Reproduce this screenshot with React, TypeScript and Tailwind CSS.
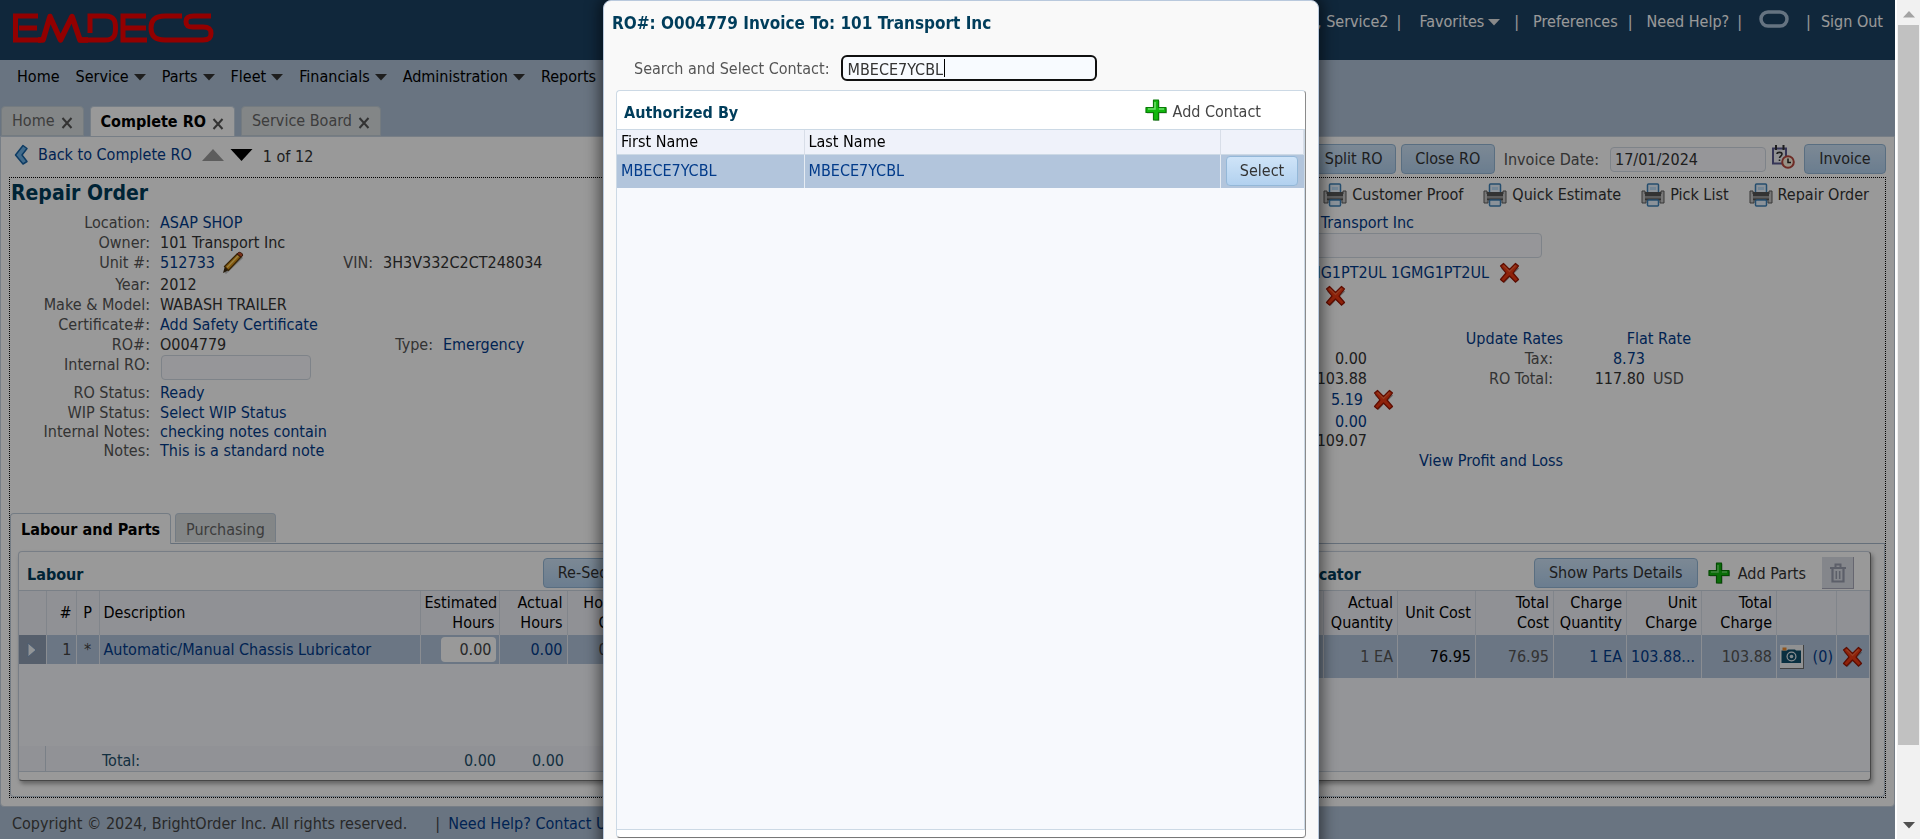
import React from "react";

function Caret({ className = "" }: { className?: string }) {
  return (
    <svg className={`h-2 w-3 shrink-0 ${className}`} viewBox="0 0 12 8" aria-hidden="true">
      <path d="M0 1h12L6 7.500z" fill="currentColor" />
    </svg>
  );
}

function Logo() {
  return (
    <svg className="h-8 w-[202px]" viewBox="0 0 202 32" fill="none" stroke="#f50000" strokeWidth="5" role="img" aria-label="EMDECS">
      <path d="M26 4H3.500v24H29M7 16h18" />
      <path d="M26 28h5L38 4.500 48.500 28 60 4.500 68 28h8" strokeWidth="5.500" strokeLinejoin="round" />
      <path d="M78 21V4h15c10 0 10.500 6 10.500 12S103 28 93 28H68" />
      <path d="M134 4h-23v24h24M113 16h21" />
      <path d="M170 4h-17c-11 0-14 5-14 12s3 12 14 12h38c7 0 8-3 8-6.500S198 15 191 15h-10c-5 0-7-1-7-5.500S177 4 182 4h17" />
    </svg>
  );
}

function RedX() {
  return (
    <svg className="h-[22px] w-[22px]" viewBox="0 0 22 22" role="img" aria-label="Remove">
      <path d="M5 3.500 11 9l6-5.500 3 3L14.500 12l5 6.500-3 2.500L11 15l-5.500 6-3-2.500 5-6.500L2 6.500z" fill="#555" opacity=".5" />
      <path d="M4.500 1.500 10.500 7.500 16.500 1.500 19.500 4 14 11l5.500 6.500-3 2.500-6-6-6 6-3-2.500L7 11 1.500 4z" fill="#ee3a12" stroke="#9c1400" strokeWidth="1.200" strokeLinejoin="round" />
      <path d="M4.500 3.500 10.500 9.500 16.500 3.500" fill="none" stroke="#f8683a" strokeWidth="1.200" />
    </svg>
  );
}

function GreenPlus() {
  return (
    <svg className="h-[22px] w-[22px]" viewBox="0 0 22 22" aria-hidden="true">
      <path d="M9.500 2h5v7.500H22v5h-7.500V22h-5v-7.500H2v-5h7.500z" fill="#666" opacity=".45" />
      <path d="M8.500 1h5v7.500H21v5h-7.500V21h-5v-7.500H1v-5h7.500z" fill="#12b80e" stroke="#087a06" strokeWidth="1.200" strokeLinejoin="round" />
      <path d="M10 3v7H3M14 10h5" fill="none" stroke="#6fe06c" strokeWidth="1.500" />
    </svg>
  );
}

function Printer() {
  return (
    <svg className="h-6 w-6 shrink-0" viewBox="0 0 24 24" aria-hidden="true">
      <path d="M1 8h3v3h16V8h3v12h-4v-3H5v3H1z" fill="#c8c8c8" stroke="#5c5c5c" />
      <rect x="6.500" y="1" width="11" height="10" rx="1" fill="#e8f4ff" stroke="#3f81b8" strokeWidth="1.500" />
      <path d="M9 4h6v3H9z" fill="#bfe0fa" />
      <path d="M4 9h16v8H4z" fill="#555" />
      <path d="M4 13h16v2.500H4z" fill="#999" />
      <rect x="6.500" y="17" width="11" height="6" rx="1" fill="#e8f4ff" stroke="#3f81b8" strokeWidth="1.500" />
    </svg>
  );
}

function CalendarClock() {
  return (
    <svg className="h-6 w-6" viewBox="0 0 24 24" role="img" aria-label="Pick date">
      <rect x="2" y="3.500" width="13" height="15" fill="#f2f2f6" stroke="#5b5b92" strokeWidth="2" />
      <path d="M5 0v5M12.500 0v5" stroke="#333" strokeWidth="2" />
      <path d="M6 9c0-2.200 5-2.200 5 0 0 2-2.300 2-2.500 4M8.500 14.500v1.500" fill="none" stroke="#333" strokeWidth="1.600" />
      <circle cx="17" cy="17" r="5.800" fill="#fff3df" stroke="#b8483e" strokeWidth="2" />
      <path d="M17 13.500v4h3" fill="none" stroke="#222" strokeWidth="1.500" />
    </svg>
  );
}

function Pencil() {
  return (
    <svg className="h-6 w-6" viewBox="0 0 24 24" role="img" aria-label="Edit">
      <path d="M4 22 21 6" stroke="#666" strokeWidth="3" opacity=".4" />
      <path d="M2 22l2-7 4 4z" fill="#3c2a10" />
      <path d="M3.500 15.500 16 3l4 3L7.500 19.500z" fill="#dc951a" stroke="#5a3a08" strokeWidth="1.200" />
      <path d="M6 16.500 17.500 4.500" stroke="#ffd970" strokeWidth="1.200" />
      <path d="M16 3c1-1.500 2-2 3.500-1.500S22 3.500 21.500 5L20 6z" fill="#c4502c" stroke="#5a2a10" strokeWidth="1" />
    </svg>
  );
}

function Camera() {
  return (
    <svg className="h-[24px] w-[24px] shrink-0" viewBox="0 0 24 24" role="img" aria-label="Photos">
      <path d="M0 0h24v24H0z" fill="#6d6d6d" />
      <path d="M0 0h23v23H0z" fill="#f0f2f4" />
      <path d="M1.500 5.500H7L8 4.500h7l1 1h5v12.500H1.500z" fill="#0f4f6c" />
      <path d="M2.500 2.500h4v3h-4z" fill="#ef8b2d" />
      <circle cx="11.500" cy="11.500" r="5" fill="#e8eef2" />
      <circle cx="11.500" cy="11.500" r="3.800" fill="#0f4f6c" />
      <circle cx="11.500" cy="11.500" r="1.800" fill="#d5e4ec" />
    </svg>
  );
}

function Trash() {
  return (
    <svg className="h-5 w-4" viewBox="0 0 16 20" fill="none" stroke="#9a9fb0" aria-hidden="true">
      <path d="M0 5h16M5.500 4V1.500h5V4" strokeWidth="2" />
      <path d="M2.500 6v12.500h11V6" strokeWidth="2.200" />
      <path d="M6.300 8v8M9.700 8v8" strokeWidth="1.500" />
    </svg>
  );
}

function ActionButton({ children, className = "" }: { children: React.ReactNode; className?: string }) {
  return (
    <button
      type="button"
      className={`h-[30px] shrink-0 rounded border border-[#94b8d8] bg-linear-to-b from-[#cfe4f8] to-[#b2d1ef] text-center whitespace-nowrap text-[#333] ${className}`}
    >
      {children}
    </button>
  );
}

function Link({ children, className = "" }: { children: React.ReactNode; className?: string }) {
  return (
    <a href="#" className={`whitespace-nowrap text-[#023b8a] ${className}`}>
      {children}
    </a>
  );
}

function Row({ label, children, className = "h-5" }: { label: string; children: React.ReactNode; className?: string }) {
  return (
    <div className={`flex gap-2.5 ${className}`}>
      <div className="w-[140px] shrink-0 text-right whitespace-nowrap text-[#555]">{label}</div>
      <div className="flex whitespace-nowrap text-[#333]">{children}</div>
    </div>
  );
}

function PageTab({ label, active = false }: { label: string; active?: boolean }) {
  return (
    <div
      className={
        active
          ? "flex h-[31px] items-center gap-1.5 rounded-t border border-b-0 border-[#c6d4e2] bg-white px-2.5 font-bold text-black"
          : "flex h-[30px] items-center gap-1.5 rounded-t border border-[#c2cdd6] bg-[#dbe0e2] px-2.5 text-[#666]"
      }
    >
      <a href="#">{label}</a>
      <button type="button" aria-label={`Close ${label}`} className="pt-1">
        <svg className="h-3 w-3 text-[#555]" viewBox="0 0 12 12" aria-hidden="true">
          <path d="M1.500 1 10.500 11M10.500 1 1.500 11" stroke="currentColor" strokeWidth="2" />
        </svg>
      </button>
    </div>
  );
}

const menu = [
  { label: "Home", drop: false },
  { label: "Service", drop: true },
  { label: "Parts", drop: true },
  { label: "Fleet", drop: true },
  { label: "Financials", drop: true },
  { label: "Administration", drop: true },
  { label: "Reports", drop: false },
];

const reports = ["Customer Proof", "Quick Estimate", "Pick List", "Repair Order"];

function Header() {
  return (
    <header className="flex h-[60px] shrink-0 items-start justify-between bg-[#1c4163] pt-3 pr-3 pl-3 text-white">
      <Logo />
      <div className="flex h-5 items-center whitespace-nowrap">
        <span className="mr-2">Technician, Service2</span>|
        <button type="button" className="ml-[18px] flex items-center gap-1">
          Favorites <Caret className="text-[#e4e4e4]" />
        </button>
        <span className="mx-3.5">|</span>
        <a href="#">Preferences</a>
        <span className="mr-3.5 ml-2.5">|</span>
        <a href="#">Need Help?</a>
        <span className="ml-2">|</span>
        <svg className="mx-[17px] mb-1.5 h-[18px] w-[30px]" viewBox="0 0 30 18" aria-hidden="true">
          <rect x="2" y="2" width="26" height="14" rx="7" fill="none" stroke="#a9c0d8" strokeWidth="3.500" />
        </svg>
        <span className="mr-2.5">|</span>
        <a href="#">Sign Out</a>
      </div>
    </header>
  );
}

function RepairOrderDetails() {
  return (
    <div className="mt-1 h-[300px] w-0 flex-1 leading-5">
      <Row label="Location:"><Link>ASAP SHOP</Link></Row>
      <Row label="Owner:">101 Transport Inc</Row>
      <Row label="Unit #:" className="h-[22px]">
        <div className="flex w-[98px] items-start gap-1.5">
          <Link>512733</Link>
          <button type="button" className="-mt-0.5"><Pencil /></button>
        </div>
        <div className="w-[115px] text-right text-[#555]">VIN:</div>
        <div className="ml-2.5">3H3V332C2CT248034</div>
      </Row>
      <Row label="Year:">2012</Row>
      <Row label="Make & Model:">WABASH TRAILER</Row>
      <Row label="Certificate#:"><Link>Add Safety Certificate</Link></Row>
      <Row label="RO#:">
        <div className="w-[98px]">O004779</div>
        <div className="w-[175px] text-right text-[#555]">Type:</div>
        <Link className="ml-2.5">Emergency</Link>
      </Row>
      <Row label="Internal RO:" className="h-7">
        <input aria-label="Internal RO" className="ml-px h-[25px] w-[150px] rounded border border-[#d3dbe4] bg-[#fafbff] px-1" />
      </Row>
      <Row label="RO Status:"><Link>Ready</Link></Row>
      <Row label="WIP Status:" className="h-[19px]"><Link>Select WIP Status</Link></Row>
      <Row label="Internal Notes:" className="h-[19px]"><Link>checking notes contain</Link></Row>
      <Row label="Notes:" className="h-[19px]"><Link>This is a standard note</Link></Row>
    </div>
  );
}

function InvoiceDetails() {
  return (
    <div className="mt-1 w-[600px] shrink-0 leading-5">
      <div className="h-5 w-[129px] text-right"><Link>101 Transport Inc</Link></div>
      <input aria-label="Reference" className="block h-[25px] w-[257px] rounded border border-[#d3dbe4] bg-[#fafbff] px-1" />
      <div className="mt-[3px] flex h-6 items-center">
        <div className="flex w-[204px] justify-end"><Link>1GMG1PT2UL 1GMG1PT2UL</Link></div>
        <button type="button" className="ml-2.5"><RedX /></button>
      </div>
      <button type="button" className="ml-10 block"><RedX /></button>
      <div className="mt-[22px] flex">
        <div className="w-[278px] text-right"><Link>Update Rates</Link></div>
        <div className="w-[128px] text-right"><Link>Flat Rate</Link></div>
      </div>
      <div className="flex">
        <div className="w-[82px] text-right text-[#333]">0.00</div>
        <div className="w-[186px] text-right text-[#555]">Tax:</div>
        <div className="w-[92px] text-right"><Link>8.73</Link></div>
      </div>
      <div className="flex h-[19px]">
        <div className="w-[82px] text-right text-[#333]">103.88</div>
        <div className="w-[186px] text-right text-[#555]">RO Total:</div>
        <div className="w-[92px] text-right text-[#333]">117.80</div>
        <div className="ml-2 text-[#555]">USD</div>
      </div>
      <div className="flex h-6 items-center">
        <div className="w-[78px] text-right"><Link>5.19</Link></div>
        <button type="button" className="ml-2.5"><RedX /></button>
      </div>
      <div className="h-[19px] w-[82px] text-right"><Link>0.00</Link></div>
      <div className="w-[82px] text-right text-[#333]">109.07</div>
      <div className="w-[278px] text-right"><Link>View Profit and Loss</Link></div>
    </div>
  );
}

const headCell = "border-r border-[#d8dee8] px-1 font-normal text-black";
const bodyCell = "border-r border-[#e6ecf3] px-1";

function LabourCard() {
  return (
    <section className="flex h-[230px] w-0 flex-1 flex-col rounded border border-[#c9d3e0] border-b-[#777] bg-white shadow-[2px_3px_4px_rgba(0,0,0,0.35)]">
      <div className="flex h-[38px] shrink-0 items-center pt-1 pl-2">
        <h2 className="w-[516px] pt-1 font-bold text-[#003d5b]">Labour</h2>
        <ActionButton className="w-[124px]">Re-Sequence</ActionButton>
      </div>
      <div className="flex flex-1 flex-col border-y border-[#ccd6e2] bg-[#f7f8fd]">
        <table className="w-full table-fixed border-collapse leading-5">
          <colgroup>
            <col className="w-[27px]" />
            <col className="w-[30px]" />
            <col className="w-[23px]" />
            <col className="w-[321px]" />
            <col className="w-[79px]" />
            <col className="w-[68px]" />
            <col className="w-[68px]" />
            <col />
          </colgroup>
          <thead>
            <tr className="h-[44px] bg-[#f0f2f9]">
              <th className={headCell} />
              <th className={`${headCell} text-right`}>#</th>
              <th className={`${headCell} text-center`}>P</th>
              <th className={`${headCell} text-left`}>Description</th>
              <th className={`${headCell} text-right`}>Estimated Hours</th>
              <th className={`${headCell} text-right`}>Actual Hours</th>
              <th className={`${headCell} text-right`}>Hourly Cost</th>
              <th className={headCell} />
            </tr>
          </thead>
          <tbody>
            <tr className="h-[29px] bg-[#b2c5dc] text-[#444]">
              <td className="border-r border-[#e6ecf3] bg-[#909fb4] px-2">
                <svg className="h-4 w-2.5" viewBox="0 0 10 16" aria-hidden="true">
                  <path d="M1 1 9 8 1 15z" fill="#f4f8fc" stroke="#7f9cc0" />
                </svg>
              </td>
              <td className={`${bodyCell} text-right`}>1</td>
              <td className={`${bodyCell} text-center`}>*</td>
              <td className={bodyCell}><Link>Automatic/Manual Chassis Lubricator</Link></td>
              <td className="border-r border-[#e6ecf3] pr-[3px]">
                <input aria-label="Estimated Hours" defaultValue="0.00" className="ml-auto block h-[25px] w-[55px] rounded bg-white px-1 text-right text-[#444]" />
              </td>
              <td className={`${bodyCell} text-right`}><Link>0.00</Link></td>
              <td className={`${bodyCell} text-right`}>0.00</td>
              <td className={bodyCell} />
            </tr>
          </tbody>
        </table>
        <div className="mt-auto flex h-[25px] items-center bg-[#f2f4fa] text-[#1f4f6b]">
          <div className="h-full w-[27px] border-r border-[#ccd6e2]" />
          <div className="w-[377px] pt-1 pl-14">Total:</div>
          <div className="w-[73px] pt-1 text-right">0.00</div>
          <div className="w-[68px] pt-1 text-right">0.00</div>
        </div>
      </div>
      <div className="h-2 shrink-0" />
    </section>
  );
}

function PartsCard() {
  return (
    <section className="flex h-[230px] w-0 flex-1 flex-col rounded border border-[#c9d3e0] border-r-[#777] border-b-[#777] bg-white shadow-[2px_3px_4px_rgba(0,0,0,0.35)]">
      <div className="flex h-[38px] shrink-0 items-center pt-1 pr-4">
        <h2 className="mr-[173px] ml-auto pt-1 font-bold whitespace-nowrap text-[#003d5b]">Automatic/Manual Chassis Lubricator</h2>
        <ActionButton className="w-[164px]">Show Parts Details</ActionButton>
        <button type="button" className="ml-2.5 flex items-center gap-2 whitespace-nowrap text-[#333]">
          <GreenPlus />
          <span className="pt-0.5">Add Parts</span>
        </button>
        <button type="button" aria-label="Delete" className="ml-4 flex h-8 w-8 items-center justify-center border-r border-b border-[#aab] bg-[#dcdfe8]">
          <Trash />
        </button>
      </div>
      <div className="flex-1 border-y border-[#ccd6e2] bg-[#f7f8fd]">
        <table className="w-full table-fixed border-collapse leading-5">
          <colgroup>
            <col />
            <col className="w-[74px]" />
            <col className="w-[78px]" />
            <col className="w-[78px]" />
            <col className="w-[73px]" />
            <col className="w-[75px]" />
            <col className="w-[75px]" />
            <col className="w-[60px]" />
            <col className="w-[33px]" />
          </colgroup>
          <thead>
            <tr className="h-[44px] bg-[#f0f2f9]">
              <th className={headCell} />
              <th className={`${headCell} text-right`}>Actual Quantity</th>
              <th className={`${headCell} text-right whitespace-nowrap`}>Unit Cost</th>
              <th className={`${headCell} text-right`}>Total<br />Cost</th>
              <th className={`${headCell} text-right`}>Charge Quantity</th>
              <th className={`${headCell} text-right`}>Unit Charge</th>
              <th className={`${headCell} text-right`}>Total Charge</th>
              <th className={headCell} />
              <th className={headCell} />
            </tr>
          </thead>
          <tbody>
            <tr className="h-[43px] bg-[#b2c5dc] text-right whitespace-nowrap text-[#555]">
              <td className={bodyCell} />
              <td className={bodyCell}>1 EA</td>
              <td className={`${bodyCell} text-black`}>76.95</td>
              <td className={bodyCell}>76.95</td>
              <td className={bodyCell}><Link>1 EA</Link></td>
              <td className={`${bodyCell} text-left`}><Link>103.88...</Link></td>
              <td className={bodyCell}>103.88</td>
              <td className="border-r border-[#e6ecf3] px-[3px]">
                <div className="flex items-center justify-between">
                  <button type="button"><Camera /></button>
                  <Link>(0)</Link>
                </div>
              </td>
              <td className="border-r border-[#e6ecf3]">
                <button type="button" className="mx-auto block"><RedX /></button>
              </td>
            </tr>
          </tbody>
        </table>
      </div>
      <div className="h-2 shrink-0" />
    </section>
  );
}

function ContactDialog() {
  return (
    <div
      role="dialog"
      aria-label="Invoice To"
      className="flex h-[900px] w-[716px] flex-col rounded-lg border border-[#b9c9dd] bg-[#f9f9f9] px-3 shadow-[0_0_14px_4px_rgba(0,0,0,0.5)]"
    >
      <h1 className="-ml-1 mt-3 text-[17px] leading-5 font-bold text-[#003d5b]">RO#: O004779 Invoice To: 101 Transport Inc</h1>
      <div className="mt-[22px] flex items-center gap-3 pl-[18px]">
        <label htmlFor="contact" className="pt-0.5 text-[#555]">Search and Select Contact:</label>
        <div className="relative">
          <input
            id="contact"
            defaultValue="MBECE7YCBL"
            className="block h-[26px] w-[256px] rounded-md border-2 border-[#101010] bg-[#f8fbff] px-1 pt-0.5 text-[#333] outline-none"
          />
          <span className="absolute top-1 left-[103px] h-[18px] w-px bg-black" />
        </div>
      </div>
      <section className="mt-[9px] flex h-[748px] flex-col rounded border border-[#ccd9e5] border-r-[#8b8b8b] border-b-[#777] bg-white">
        <div className="flex h-[38px] shrink-0 items-center justify-between pr-11 pl-[7px]">
          <h2 className="pt-1.5 font-bold text-[#003d5b]">Authorized By</h2>
          <button type="button" className="flex items-center gap-1.5 text-[#444]">
            <GreenPlus />
            <span className="pt-1">Add Contact</span>
          </button>
        </div>
        <div className="flex-1 border-y border-r border-[#ccd9e5] bg-[#f7f9fd]">
          <table className="w-full table-fixed border-collapse">
            <colgroup>
              <col className="w-[187px]" />
              <col />
              <col className="w-[83px]" />
            </colgroup>
            <thead>
              <tr className="h-6 border-b border-[#ccd9e5] bg-[#eff2fa] text-left leading-5">
                <th className={headCell}>First Name</th>
                <th className={headCell}>Last Name</th>
                <th className={headCell} />
              </tr>
            </thead>
            <tbody>
              <tr className="h-[34px] bg-[#b2c5dc]">
                <td className={bodyCell}><Link>MBECE7YCBL</Link></td>
                <td className={bodyCell}><Link>MBECE7YCBL</Link></td>
                <td>
                  <ActionButton className="ml-[5px] block w-[72px]">Select</ActionButton>
                </td>
              </tr>
            </tbody>
          </table>
        </div>
        <div className="h-[7px] shrink-0" />
      </section>
    </div>
  );
}

export default function App() {
  return (
    <div className="flex h-screen overflow-hidden bg-white text-base [font-family:'DejaVu_Sans_Condensed','Noto_Sans',sans-serif]">
      <div className="relative flex min-w-0 flex-1 flex-col overflow-hidden bg-[#afc2d7]">
        <Header />
        <nav className="flex h-[46px] shrink-0 items-start gap-4 pt-[5px] pl-[17px] text-black">
          {menu.map((m) => (
            <a key={m.label} href="#" className="flex items-center gap-[5px]">
              {m.label}
              {m.drop && <Caret className="text-[#333]" />}
            </a>
          ))}
        </nav>
        <div className="flex h-[30px] shrink-0 items-start gap-1.5 pl-px">
          <PageTab label="Home" />
          <PageTab label="Complete RO" active />
          <PageTab label="Service Board" />
        </div>

        <main className="flex shrink-0 flex-col rounded-b border border-[#c6d2e0] bg-white px-2 pb-2">
          <div className="flex h-10 items-center whitespace-nowrap">
            <div className="flex items-center pb-1">
              <svg className="ml-1 h-6 w-4" viewBox="0 0 16 24" aria-hidden="true">
                <path d="M10 2.500 2.500 12 10 21l4-2.500L9 12l5-6.500z" fill="#6fb3e8" stroke="#1763a6" strokeWidth="1.500" strokeLinejoin="round" />
              </svg>
              <Link className="ml-[9px]">Back to Complete RO</Link>
              <button type="button" aria-label="Previous" className="ml-2.5">
                <svg className="h-3 w-[22px]" viewBox="0 0 22 12"><path d="M0 12 11 0l11 12z" fill="#9c9c9c" /></svg>
              </button>
              <button type="button" aria-label="Next" className="ml-1.5">
                <svg className="h-3 w-[23px]" viewBox="0 0 22 12"><path d="M0 0h22L11 12z" fill="#000" /></svg>
              </button>
              <span className="ml-2.5 pt-1 text-[#333]">1 of 12</span>
            </div>
            <div className="ml-auto flex items-center gap-[5px] pt-1">
              <ActionButton className="w-[84px]">Split RO</ActionButton>
              <ActionButton className="w-[94px]">Close RO</ActionButton>
              <label htmlFor="invoice-date" className="ml-1 pt-0.5 text-[#555]">Invoice Date:</label>
              <input id="invoice-date" defaultValue="17/01/2024" className="ml-1.5 h-[25px] w-[156px] rounded border border-[#d3dbe4] bg-[#fafbff] px-1 text-[#333]" />
              <button type="button" className="pb-1"><CalendarClock /></button>
              <ActionButton className="ml-1 w-[82px]">Invoice</ActionButton>
            </div>
          </div>

          <div className="border border-dotted border-black">
            <div className="flex h-[31px] items-center justify-between pr-4 pl-px">
              <h1 className="text-[21px] font-bold text-[#003d5b]">Repair Order</h1>
              <div className="flex gap-5 pt-0.5">
                {reports.map((r) => (
                  <a key={r} href="#" className="flex items-center gap-[5px] whitespace-nowrap text-[#333]">
                    <Printer />
                    {r}
                  </a>
                ))}
              </div>
            </div>
            <div className="flex">
              <RepairOrderDetails />
              <InvoiceDetails />
            </div>

            <div className="flex h-[31px] items-end">
              <a href="#" className="flex h-[31px] items-center rounded-t border border-b-0 border-[#c2cfdd] px-2.5 pt-0.5 font-bold text-black">Labour and Parts</a>
              <div className="flex h-[31px] flex-1 items-start border-b border-[#a9b9cc] pl-1">
                <a href="#" className="flex h-[29px] items-center rounded-t border border-b-0 border-[#c2cfdd] bg-[#dbe0e2] px-2.5 pt-1 text-[#666]">Purchasing</a>
              </div>
            </div>
            <div className="flex gap-4 rounded-b border border-t-0 border-[#c2cfdd] pt-[7px] pr-[13px] pb-[15px] pl-[7px]">
              <LabourCard />
              <PartsCard />
            </div>
          </div>
        </main>

        <footer className="flex h-8 shrink-0 items-center pt-0.5 pl-3 whitespace-nowrap text-[#444]">
          <span>Copyright © 2024, BrightOrder Inc. All rights reserved.</span>
          <span className="ml-7">|</span>
          <Link className="ml-2">Need Help? Contact Us</Link>
        </footer>
        <div className="absolute inset-0 bg-black/40" />
      </div>

      <div className="flex w-[25px] shrink-0 flex-col items-center border-l-2 border-white bg-[#f1f1f1] pt-2.5">
        <svg className="h-2 w-3 shrink-0" viewBox="0 0 12 8"><path d="M0 7.500h12L6 1z" fill="#a3a3a3" /></svg>
        <div className="mt-[7px] h-[720px] w-[21px] bg-[#c1c1c1]" />
        <svg className="mt-auto mb-2.5 h-2 w-3 shrink-0" viewBox="0 0 12 8"><path d="M0 1h12L6 7.500z" fill="#505050" /></svg>
      </div>

      <div className="pointer-events-none fixed inset-0 flex justify-center overflow-hidden pl-0.5">
        <div className="pointer-events-auto">
          <ContactDialog />
        </div>
      </div>
    </div>
  );
}
